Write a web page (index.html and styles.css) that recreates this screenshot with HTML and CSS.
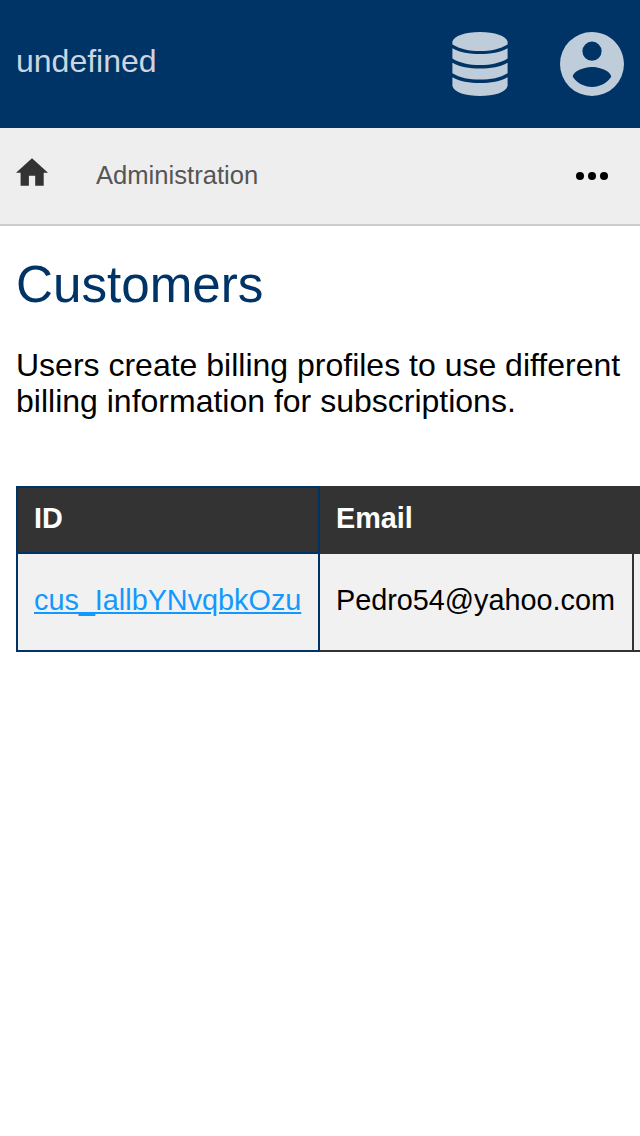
FILE: index.html
```
<!DOCTYPE html>
<html lang="en">
<head>
<meta charset="utf-8">
<title>Customers</title>
<link rel="stylesheet" href="styles.css">
</head>
<body>
<header class="topbar">
  <span class="brand">undefined</span>
  <nav class="actions">
    <svg class="icon-database" viewBox="0 0 56 64" aria-hidden="true">
      <path d="M.4 9.500C2 4 13 0 28 0S54 4 55.600 9.500V12.400C48 17 39 18.900 28 18.900S8 17 .4 12.400Z"/>
      <path d="M.4 16.300C8 20.500 17 22 28 22S48 20.500 55.600 16.300V26.500C48 31.200 39 33 28 33S8 31.200 .4 26.500Z"/>
      <path d="M.4 30.700C8 34.900 17 36.500 28 36.500S48 34.900 55.600 30.700V41.200C48 45.800 39 47.600 28 47.600S8 45.800 .4 41.200Z"/>
      <path d="M.4 45.200C8 49.400 17 51 28 51S48 49.400 55.600 45.200V54C54 60.500 42 64 28 64S2 60.500 .4 54Z"/>
    </svg>
    <svg class="icon-account" viewBox="2 2 20 20" aria-hidden="true">
      <path d="M12 19.200C9.500 19.200 7.290 17.920 6 16C6.030 14 10 12.900 12 12.900S17.970 14 18 16C16.710 17.920 14.500 19.200 12 19.200M12 5A3 3 0 0 1 15 8A3 3 0 0 1 12 11A3 3 0 0 1 9 8A3 3 0 0 1 12 5M12 2A10 10 0 0 0 2 12A10 10 0 0 0 12 22A10 10 0 0 0 22 12C22 6.470 17.500 2 12 2Z"/>
    </svg>
  </nav>
</header>
<nav class="breadcrumb">
  <svg class="icon-home" viewBox="0 0 32 28" aria-hidden="true">
    <path d="M16 .3L32 14.700H27.700V27.700H19.200V17.700H12.900V27.700H4.600V14.700H0Z"/>
  </svg>
  <span class="crumb">Administration</span>
  <svg class="icon-more" viewBox="0 0 32 8" aria-hidden="true">
    <circle cx="4" cy="4" r="4"/><circle cx="16" cy="4" r="4"/><circle cx="28" cy="4" r="4"/>
  </svg>
</nav>
<main class="content">
  <h1 class="title">Customers</h1>
  <p class="intro">Users create billing profiles to use different billing information for subscriptions.</p>
  <div class="table-wrap">
    <table class="customers">
      <colgroup><col class="col-id"><col class="col-email"><col class="col-rest"></colgroup>
      <tr><th class="key">ID</th><th>Email</th><th class="rest"></th></tr>
      <tr><td class="key"><a class="link" href="#">cus_IallbYNvqbkOzu</a></td><td>Pedro54@yahoo.com</td><td class="rest"></td></tr>
    </table>
  </div>
</main>
</body>
</html>
```

FILE: styles.css
```
* {
  box-sizing: border-box;
}

body {
  margin: 0;
  min-height: 1136px;
  overflow: hidden;
  background: #fff;
  color: #000;
  font-family: "Liberation Sans", Arial, sans-serif;
}

.topbar {
  display: flex;
  justify-content: space-between;
  height: 128px;
  padding: 32px 16px;
  background: #003366;
}

.brand {
  margin-top: 11px;
  font-size: 32px;
  line-height: 36px;
  color: #ccd6e0;
}

.actions {
  display: flex;
  gap: 52px;
  fill: #bfccd9;
}

.icon-database {
  width: 56px;
  height: 64px;
}

.icon-account {
  width: 64px;
  height: 64px;
}

.breadcrumb {
  display: flex;
  align-items: flex-start;
  height: 98px;
  padding: 30px 32px 0 16px;
  border-bottom: 2px solid #ccc;
  background: #eee;
}

.icon-home {
  width: 32px;
  height: 28px;
  fill: #333;
}

.crumb {
  margin-top: 2px;
  margin-left: 48px;
  font-size: 25.6px;
  line-height: 30px;
  color: #555;
}

.icon-more {
  width: 32px;
  height: 8px;
  margin-top: 14px;
  margin-left: auto;
}

.content {
  padding: 29px 0 0 16px;
}

.title {
  margin: 0;
  font-size: 51.2px;
  font-weight: normal;
  line-height: 60px;
  color: #003366;
}

.intro {
  margin: 32px 16px 67px 0;
  font-size: 32px;
  line-height: 36px;
}

.table-wrap {
  overflow: hidden;
}

.customers {
  width: 624px;
  table-layout: fixed;
  border-spacing: 0;
  font-size: 28.8px;
  line-height: 32px;
}

.col-id {
  width: 304px;
}

.col-email {
  width: 314px;
}

.col-rest {
  width: 6px;
}

.customers th {
  height: 68px;
  padding: 14px 16px 18px;
  border: solid #333;
  border-width: 2px 2px 2px 0;
  background: #333;
  color: #fff;
  text-align: left;
}

.customers td {
  height: 98px;
  padding: 30px 16px 34px;
  border: solid #333;
  border-width: 0 2px 2px 0;
  background: #f1f1f1;
}

.customers .key {
  border-color: #003366;
  border-left-width: 2px;
}

.customers .rest {
  padding: 0;
  border-right-width: 0;
}

.link {
  color: #1199ff;
}
```
